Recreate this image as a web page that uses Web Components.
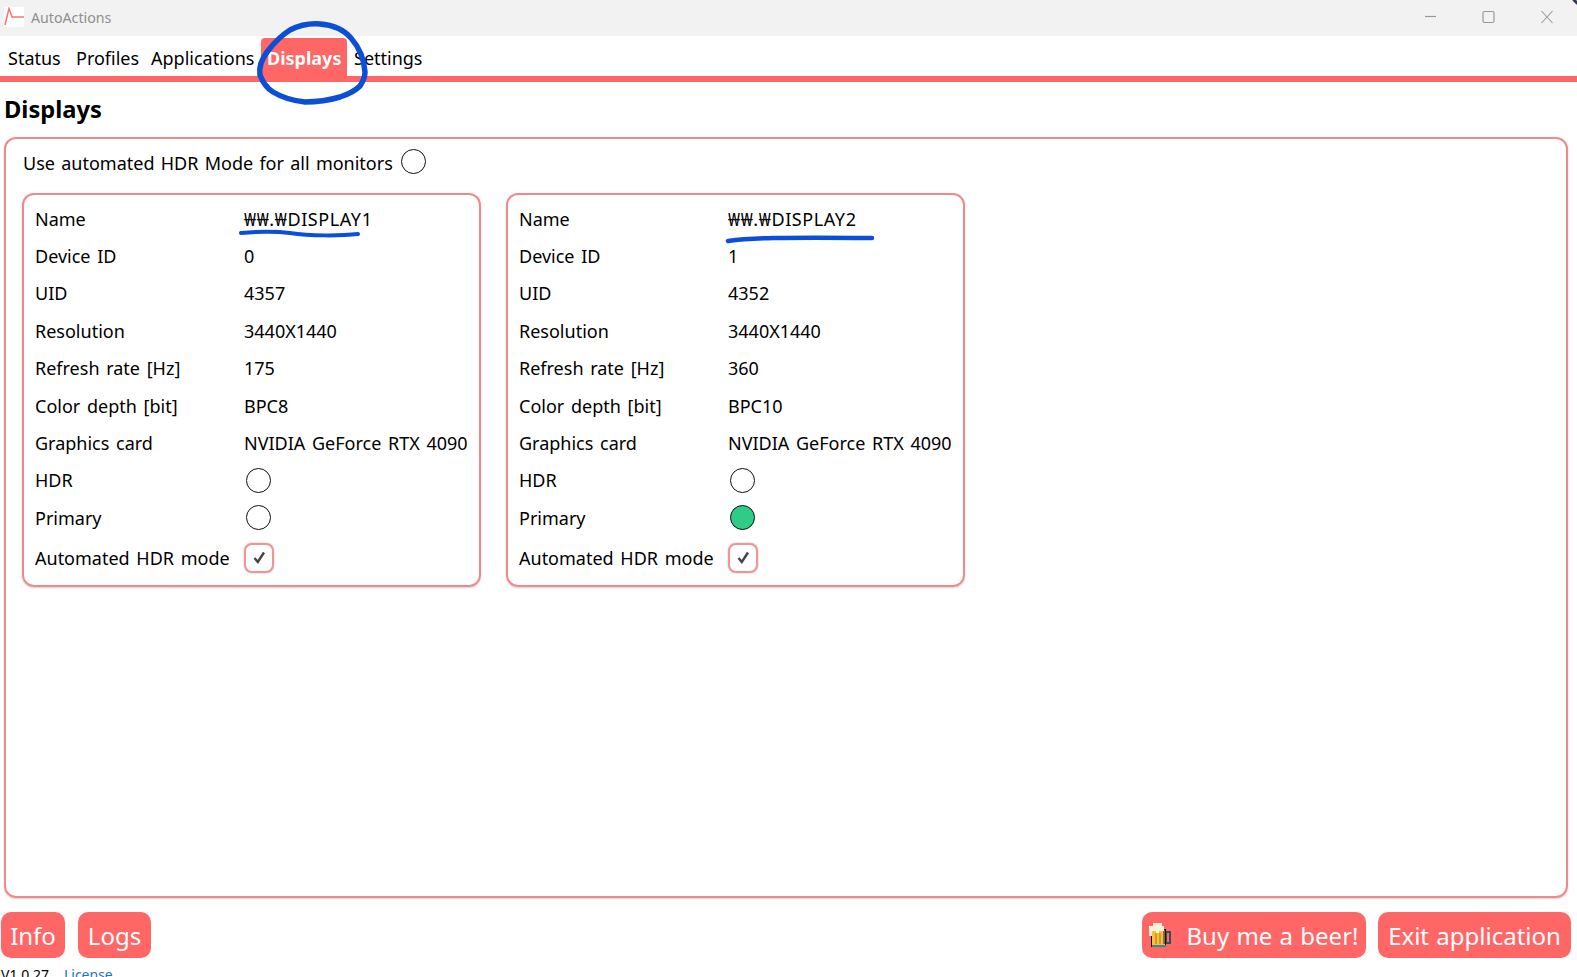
<!DOCTYPE html>
<html>
<head>
<meta charset="utf-8">
<style>
html, body { margin: 0; height: 977px; overflow: hidden; background: #fff; }
body { font-family: "Noto Sans", "Noto Sans CJK KR", sans-serif; color: #000; position: relative; }
</style>
</head>
<body>
<app-shell>
  <title-bar slot="title" label="AutoActions"></title-bar>
  <tab-bar slot="tabs">
    <tab-item style="width:68px">Status</tab-item>
    <tab-item style="width:75px">Profiles</tab-item>
    <tab-item style="width:117px">Applications</tab-item>
    <tab-item active style="width:86px">Displays</tab-item>
    <tab-item>Settings</tab-item>
  </tab-bar>
  <h-panel>
    <display-card name="₩₩.₩DISPLAY1" device="0" uid="4357" res="3440X1440" rate="175" depth="BPC8"></display-card>
    <display-card name="₩₩.₩DISPLAY2" device="1" uid="4352" res="3440X1440" rate="360" depth="BPC10" primary></display-card>
  </h-panel>
  <foot-bar slot="foot"></foot-bar>
</app-shell>
<pen-marks></pen-marks>
<script>
class TitleBar extends HTMLElement {
    constructor() {
        super();
        let shadowRoot = this.attachShadow({ mode: 'open' });
        shadowRoot.innerHTML = `
        <style>
        :host { display: flex; align-items: center; height: 36px; background: #f2f2f2; color: #8f8f8f; font-size: 14.2px; }
        .logo { width: 20px; height: 20px; margin: 0 7px 2px 4px; background: #fff; display: block; }
        .label { flex: 1; padding-bottom: 2px; }
        .btns { display: flex; margin-right: 2px; }
        .btns svg { width: 58px; height: 36px; display: block; }
        </style>
        <svg class="logo" viewBox="0 0 20 20"><path d="M1 18 L5 1.5 L8 10 L20 10" fill="none" stroke="#f9766c" stroke-width="1.5"/></svg>
        <span class="label">${this.getAttribute('label')}</span>
        <div class="btns">
            <svg viewBox="0 0 58 36"><path d="M24 16.5h11" stroke="#999" stroke-width="1.2"/></svg>
            <svg viewBox="0 0 58 36"><rect x="24" y="11.5" width="11" height="11" rx="1.5" fill="none" stroke="#999" stroke-width="1.2"/></svg>
            <svg viewBox="0 0 58 36"><path d="M24.5 11l11 12M35.5 11l-11 12" stroke="#999" stroke-width="1.1"/></svg>
        </div>
        `;
    }
}

class TabBar extends HTMLElement {
    constructor() {
        super();
        let shadowRoot = this.attachShadow({ mode: 'open' });
        shadowRoot.innerHTML = `
        <style>
        :host { display: flex; align-items: flex-end; height: 40px; border-bottom: 6px solid #ff6666; padding-left: 1px; box-sizing: content-box; }
        </style>
        <slot></slot>
        `;
    }
}

class TabItem extends HTMLElement {
    constructor() {
        super();
        let shadowRoot = this.attachShadow({ mode: 'open' });
        shadowRoot.innerHTML = `
        <style>
        :host { display: block; box-sizing: border-box; height: 38px; line-height: 40px; padding: 0 7px; font-size: 18px; white-space: nowrap; border-radius: 4px 4px 0 0; }
        :host([active]) { background: #ff6666; color: #fff; font-weight: 700; padding: 0 6px; }
        </style>
        <slot></slot>
        `;
    }
}

class HPanel extends HTMLElement {
    constructor() {
        super();
        let shadowRoot = this.attachShadow({ mode: 'open' });
        shadowRoot.innerHTML = `
        <style>
        :host { display: block; padding: 0 9px 0 4px; }
        h1 { margin: 0; font-size: 23.7px; font-weight: 700; height: 55px; line-height: 54px; }
        .box { box-sizing: border-box; height: 761px; border: 2px solid #f08a8a; border-radius: 12px; padding: 2px 16px; box-shadow: 0 1px 2px rgba(120,120,140,.35); }
        .all { display: flex; align-items: center; gap: 8px; height: 44px; margin-bottom: 8px; padding-left: 1px; font-size: 18px; word-spacing: 1.6px; }
        .all status-dot { margin-top: -3px; }
        .cards { display: flex; gap: 25px; }
        </style>
        <h1>Displays</h1>
        <div class="box">
            <div class="all">Use automated HDR Mode for all monitors <status-dot></status-dot></div>
            <div class="cards"><slot></slot></div>
        </div>
        `;
    }
}

class StatusDot extends HTMLElement {
    constructor() {
        super();
        let shadowRoot = this.attachShadow({ mode: 'open' });
        shadowRoot.innerHTML = `
        <style>
        :host { display: block; box-sizing: border-box; width: 25px; height: 25px; border: 1.5px solid #111; border-radius: 50%; background: #fff; }
        :host([on]) { background: #2ecc87; }
        </style>
        `;
    }
}

class CheckBox extends HTMLElement {
    constructor() {
        super();
        let shadowRoot = this.attachShadow({ mode: 'open' });
        shadowRoot.innerHTML = `
        <style>
        :host { display: flex; align-items: center; justify-content: center; box-sizing: border-box; width: 30px; height: 30px; border: 2px solid #ee9696; border-radius: 8px; background: #fff; box-shadow: 0 0 2px rgba(120,120,120,.5); }
        svg { width: 13px; height: 13px; display: block; }
        </style>
        <svg viewBox="0 0 13 13"><path d="M1.5 7 L4.8 11 L11 1.5" fill="none" stroke="#444" stroke-width="2.4"/></svg>
        `;
    }
}

class DisplayCard extends HTMLElement {
    constructor() {
        super();
        let a = (n) => this.getAttribute(n);
        let rows = [
            ['Name', a('name'), 'nm'],
            ['Device ID', a('device')],
            ['UID', a('uid')],
            ['Resolution', a('res')],
            ['Refresh rate [Hz]', a('rate')],
            ['Color depth [bit]', a('depth')],
            ['Graphics card', 'NVIDIA GeForce RTX 4090'],
            ['HDR', '<status-dot></status-dot>', 'dot'],
            ['Primary', this.hasAttribute('primary') ? '<status-dot on></status-dot>' : '<status-dot></status-dot>', 'dot']
        ];
        let shadowRoot = this.attachShadow({ mode: 'open' });
        shadowRoot.innerHTML = `
        <style>
        :host { display: block; box-sizing: border-box; width: 459px; height: 394px; border: 2px solid #f08a8a; border-radius: 12px; padding: 5px 9px 0 11px; font-size: 18px; word-spacing: 2px; box-shadow: 0 1px 2px rgba(120,120,140,.35); }
        .row { display: flex; align-items: center; height: 37.4px; white-space: nowrap; }
        .k { width: 209px; }
        .dot { padding-left: 2px; }
        .nm { letter-spacing: .6px; }
        .chk { height: 42px; }
        </style>
        ${rows.map(r => `<div class="row"><div class="k">${r[0]}</div><div class="${r[2] || ''}">${r[1]}</div></div>`).join('')}
        <div class="row chk"><div class="k">Automated HDR mode</div><check-box></check-box></div>
        `;
    }
}

class AppButton extends HTMLElement {
    constructor() {
        super();
        let shadowRoot = this.attachShadow({ mode: 'open' });
        shadowRoot.innerHTML = `
        <style>
        :host { display: flex; align-items: center; justify-content: center; box-sizing: border-box; height: 46px; background: #ff6666; color: #fff; border-radius: 10px; font-size: 24px; word-spacing: 1px; white-space: nowrap; }
        </style>
        <slot></slot>
        `;
    }
}

class FootBar extends HTMLElement {
    constructor() {
        super();
        let shadowRoot = this.attachShadow({ mode: 'open' });
        shadowRoot.innerHTML = `
        <style>
        :host { display: block; padding: 14px 6px 0 1px; }
        .btns { display: flex; gap: 12px; }
        .grow { flex: 1; }
        .logs { margin-left: 1px; }
        .ver { font-size: 14px; line-height: 18px; margin-top: 8px; white-space: nowrap; }
        a { color: #1a73c8; margin-left: 15px; text-decoration: none; }
        svg { width: 22px; height: 26px; margin-right: 15px; display: block; }
        </style>
        <div class="btns">
            <app-button style="width:64px">Info</app-button>
            <app-button class="logs" style="width:73px">Logs</app-button>
            <div class="grow"></div>
            <app-button style="width:224px">
                <svg viewBox="0 0 22 26" shape-rendering="crispEdges">
                    <rect x="2" y="7" width="15" height="18" fill="#111"/>
                    <rect x="17" y="9" width="5" height="13" fill="#3a4f55"/>
                    <rect x="18" y="11" width="2" height="9" fill="#ff6666"/>
                    <rect x="3" y="9" width="13" height="15" fill="#f7bf3f"/>
                    <rect x="6" y="11" width="2" height="11" fill="#d2982a"/>
                    <rect x="10" y="11" width="2" height="11" fill="#d2982a"/>
                    <rect x="14" y="8" width="2" height="14" fill="#8a6a3a"/>
                    <rect x="3" y="23" width="14" height="2" fill="#2f8a9a"/>
                    <rect x="0" y="4" width="15" height="5" fill="#fff0d8"/>
                    <rect x="4" y="1" width="9" height="3" fill="#fff0d8"/>
                    <rect x="0" y="9" width="3" height="5" fill="#fff0d8"/>
                    <rect x="7" y="9" width="3" height="2" fill="#fff0d8"/>
                </svg><span>Buy me a beer!</span></app-button>
            <app-button style="width:193px">Exit application</app-button>
        </div>
        <div class="ver">V1.0.27<a href="#">License</a></div>
        `;
    }
}

class PenMarks extends HTMLElement {
    constructor() {
        super();
        let shadowRoot = this.attachShadow({ mode: 'open' });
        shadowRoot.innerHTML = `
        <style>
        :host { position: absolute; left: 0; top: 0; width: 1577px; height: 977px; pointer-events: none; }
        svg { display: block; }
        path { fill: none; stroke: #0b4fd8; stroke-linecap: round; stroke-linejoin: round; }
        </style>
        <svg width="1577" height="977">
            <path stroke-width="5.5" d="M305 102 C 318 102 330 100 340 97 C 349 94 356 90 360 86 C 364 80 365 76 365 72 C 364 58 358 46 351 38 C 344 30 334 25 320 24 C 308 23 300 25 290 30 C 282 35 273 44 267 52 C 261 60 259 68 260 75 C 263 83 268 89 273 92 C 283 98 295 101 305 102"/>
            <path stroke-width="4" d="M241 233 C 262 231 275 231 290 233 C 310 236 340 236 358 234"/>
            <path stroke-width="4.5" d="M728 241 C 750 238 780 237 872 238"/>
            <path stroke-width="3" style="stroke:#333a55" d="M1574 0 L1577 3"/>
        </svg>
        `;
    }
}

class AppShell extends HTMLElement {
    constructor() {
        super();
        let shadowRoot = this.attachShadow({ mode: 'open' });
        shadowRoot.innerHTML = `
        <style>
        :host { display: block; }
        </style>
        <slot name="title"></slot>
        <slot name="tabs"></slot>
        <slot></slot>
        <slot name="foot"></slot>
        `;
    }
}

customElements.define('title-bar', TitleBar);
customElements.define('tab-bar', TabBar);
customElements.define('tab-item', TabItem);
customElements.define('h-panel', HPanel);
customElements.define('status-dot', StatusDot);
customElements.define('check-box', CheckBox);
customElements.define('display-card', DisplayCard);
customElements.define('app-button', AppButton);
customElements.define('foot-bar', FootBar);
customElements.define('pen-marks', PenMarks);
customElements.define('app-shell', AppShell);
</script>
</body>
</html>
